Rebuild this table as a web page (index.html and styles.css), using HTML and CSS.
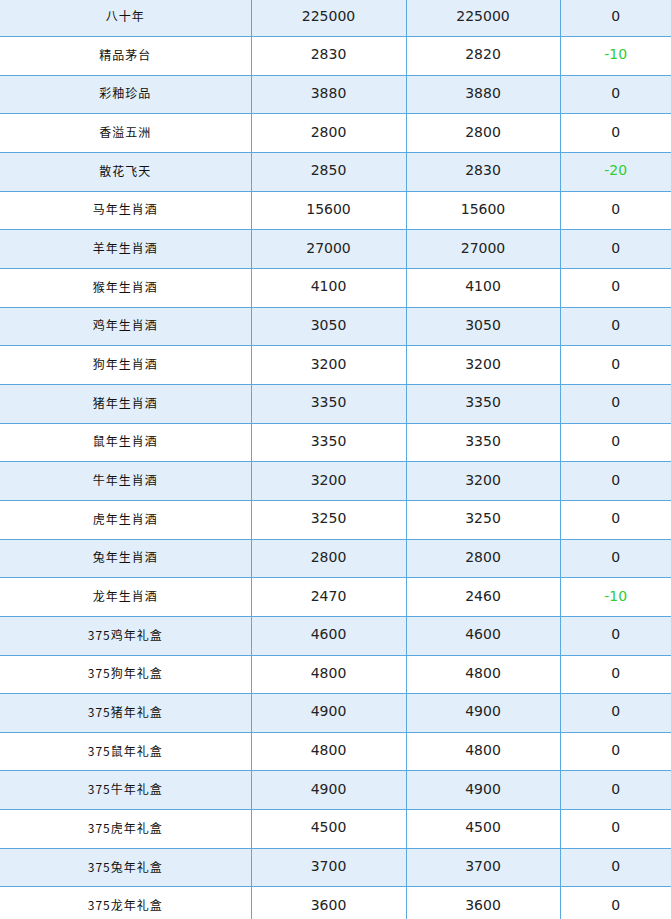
FILE: index.html
```html
<!DOCTYPE html>
<html lang="zh-CN">
<head>
<meta charset="utf-8">
<title>价格表</title>
<link rel="stylesheet" href="styles.css">
</head>
<body>
<table class="price-table">
<tbody>
<tr class="alt"><td class="name">八十年</td><td>225000</td><td>225000</td><td>0</td></tr>
<tr><td class="name">精品茅台</td><td>2830</td><td>2820</td><td class="down">-10</td></tr>
<tr class="alt"><td class="name">彩釉珍品</td><td>3880</td><td>3880</td><td>0</td></tr>
<tr><td class="name">香溢五洲</td><td>2800</td><td>2800</td><td>0</td></tr>
<tr class="alt"><td class="name">散花飞天</td><td>2850</td><td>2830</td><td class="down">-20</td></tr>
<tr><td class="name">马年生肖酒</td><td>15600</td><td>15600</td><td>0</td></tr>
<tr class="alt"><td class="name">羊年生肖酒</td><td>27000</td><td>27000</td><td>0</td></tr>
<tr><td class="name">猴年生肖酒</td><td>4100</td><td>4100</td><td>0</td></tr>
<tr class="alt"><td class="name">鸡年生肖酒</td><td>3050</td><td>3050</td><td>0</td></tr>
<tr><td class="name">狗年生肖酒</td><td>3200</td><td>3200</td><td>0</td></tr>
<tr class="alt"><td class="name">猪年生肖酒</td><td>3350</td><td>3350</td><td>0</td></tr>
<tr><td class="name">鼠年生肖酒</td><td>3350</td><td>3350</td><td>0</td></tr>
<tr class="alt"><td class="name">牛年生肖酒</td><td>3200</td><td>3200</td><td>0</td></tr>
<tr><td class="name">虎年生肖酒</td><td>3250</td><td>3250</td><td>0</td></tr>
<tr class="alt"><td class="name">兔年生肖酒</td><td>2800</td><td>2800</td><td>0</td></tr>
<tr><td class="name">龙年生肖酒</td><td>2470</td><td>2460</td><td class="down">-10</td></tr>
<tr class="alt"><td class="name">375鸡年礼盒</td><td>4600</td><td>4600</td><td>0</td></tr>
<tr><td class="name">375狗年礼盒</td><td>4800</td><td>4800</td><td>0</td></tr>
<tr class="alt"><td class="name">375猪年礼盒</td><td>4900</td><td>4900</td><td>0</td></tr>
<tr><td class="name">375鼠年礼盒</td><td>4800</td><td>4800</td><td>0</td></tr>
<tr class="alt"><td class="name">375牛年礼盒</td><td>4900</td><td>4900</td><td>0</td></tr>
<tr><td class="name">375虎年礼盒</td><td>4500</td><td>4500</td><td>0</td></tr>
<tr class="alt"><td class="name">375兔年礼盒</td><td>3700</td><td>3700</td><td>0</td></tr>
<tr><td class="name">375龙年礼盒</td><td>3600</td><td>3600</td><td>0</td></tr>
</tbody>
</table>
</body>
</html>
```

FILE: styles.css
```css
html, body {
  margin: 0;
  padding: 0;
  background: #ffffff;
}

.price-table {
  width: 671px;
  border-collapse: collapse;
  table-layout: fixed;
  margin-top: -2.67px;
  font-family: "DejaVu Sans", Verdana, sans-serif;
  font-size: 14px;
  color: #222222;
}

.price-table td {
  height: 38.67px;
  padding: 0 0 3px 0;
  text-align: center;
  vertical-align: middle;
  border: 1px solid #5aa8e0;
  box-sizing: border-box;
}

.price-table td:first-child {
  width: 251px;
  border-left: none;
}

.price-table td:nth-child(2) {
  width: 155px;
}

.price-table td:nth-child(3) {
  width: 154px;
}

.price-table td:last-child {
  border-right: none;
}

.price-table tr.alt td {
  background: #e2effb;
}

.price-table td.name {
  font-family: "Noto Sans CJK SC", "Noto Sans", sans-serif;
  font-size: 12px;
  letter-spacing: 1px;
  color: #111111;
}

.price-table td.down {
  color: #33cc33;
}
```
